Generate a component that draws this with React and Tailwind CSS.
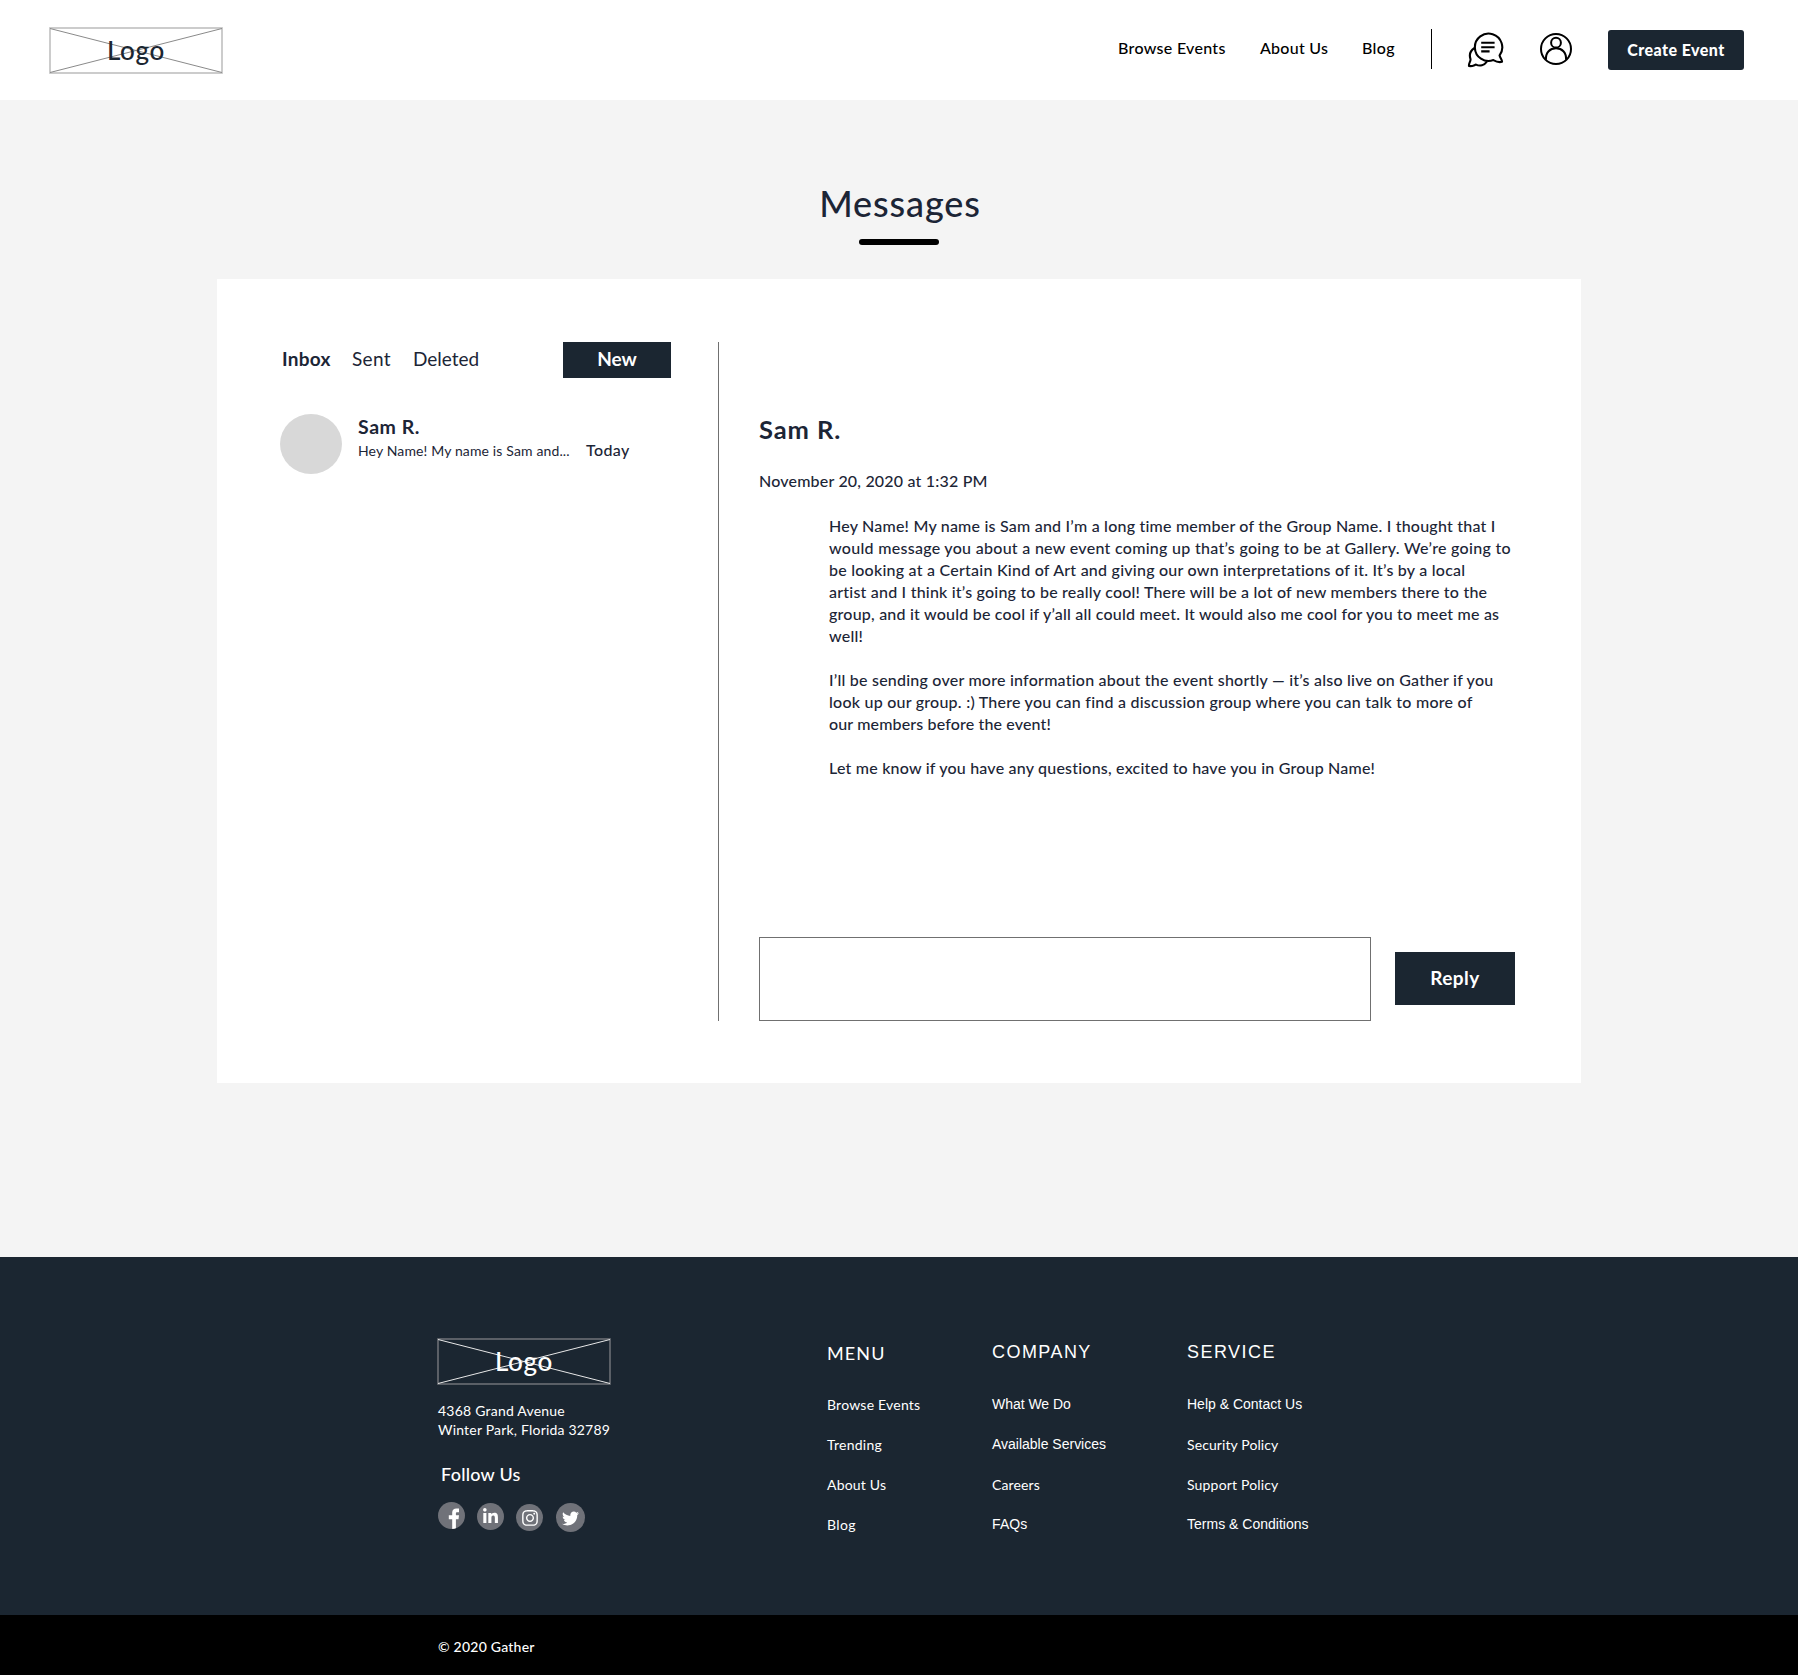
import React from "react";
import { FaLinkedinIn, FaInstagram, FaTwitter } from "react-icons/fa";

function Logo({ box, cross, text }) {
  return (
    <div className={`relative h-[47px] w-[174px] ${text}`}>
      <svg className="block" width="174" height="47" viewBox="0 0 174 47" fill="none">
        <rect x="1" y="1" width="172" height="45" stroke={box} strokeWidth="1.7" />
        <path d="M1 1.5L173 45.5M1 45.5L173 1.5" stroke={cross} strokeWidth="1" />
      </svg>
      <span className="absolute left-[58px] top-[6px] text-[26px] leading-[34px] font-medium tracking-[0.6px]">Logo</span>
    </div>
  );
}

function ChatIcon() {
  return (
    <svg width="37" height="37" viewBox="0 0 37 37" fill="none" stroke="#000" strokeWidth="2.1" strokeLinejoin="round" strokeLinecap="round">
      <path d="M32.6 23.4A13.7 13.7 0 1 0 26.4 28.1C29 29.6 32 30.6 35 29.8C35.4 28.2 33.2 25.8 32.6 23.4Z" />
      <path d="M7.6 16C3.6 18.4 2 22.6 3.5 27.2C3.8 29.3 1.6 31.4 2 34C5.2 34.6 7 33.2 9 32.6C13 34.4 17.2 33.2 19.6 29.8" />
      <path d="M14.2 10.8H27.6M14.2 15.2H27.6M14.2 19.4H22.6" strokeLinecap="butt" />
    </svg>
  );
}

function UserIcon() {
  return (
    <svg width="32" height="32" viewBox="0 0 32 32" fill="none" stroke="#000" strokeWidth="2">
      <circle cx="16" cy="16" r="15" />
      <circle cx="16" cy="9.7" r="4.9" />
      <path d="M5.9 26.8C5.6 19.2 10 15.3 16 15.3S26.4 19.2 26.1 26.8" />
    </svg>
  );
}

const paragraphs = [
  [
    ["Hey Name! My name is Sam and I’m a long time member of the Group Name. I thought that I", "tracking-[0.213px]"],
    ["would message you about a new event coming up that’s going to be at Gallery. We’re going to", "tracking-[0.288px]"],
    ["be looking at a Certain Kind of Art and giving our own interpretations of it. It’s by a local", "tracking-[0.235px]"],
    ["artist and I think it’s going to be really cool! There will be a lot of new members there to the", "tracking-[0.211px]"],
    ["group, and it would be cool if y’all all could meet. It would also me cool for you to meet me as", "tracking-[0.211px]"],
    ["well!", "tracking-[0.2px]"],
  ],
  [
    ["I’ll be sending over more information about the event shortly — it’s also live on Gather if you", "tracking-[0.222px]"],
    ["look up our group. :) There you can find a discussion group where you can talk to more of", "tracking-[0.235px]"],
    ["our members before the event!", "tracking-[0.145px]"],
  ],
  [["Let me know if you have any questions, excited to have you in Group Name!", "tracking-[0.208px]"]],
];

const lato = "font-['Lato',sans-serif]";
const sans = "relative -top-px font-['Liberation_Sans',sans-serif]";

const columns = [
  {
    title: ["MENU", "tracking-[1.1px]"],
    width: "w-[165px]",
    links: [
      ["Browse Events", `${lato} tracking-[0.22px]`],
      ["Trending", `${lato} tracking-[0.25px]`],
      ["About Us", `${lato} tracking-[0.2px]`],
      ["Blog", `${lato} tracking-[0.4px]`],
    ],
  },
  {
    title: ["COMPANY", `${sans} tracking-[1.45px]`],
    width: "w-[195px]",
    links: [
      ["What We Do", `${sans} tracking-[-0.035px]`],
      ["Available Services", `${sans} tracking-[-0.008px]`],
      ["Careers", `${lato} tracking-[0.12px]`],
      ["FAQs", `${sans} tracking-[0.1px]`],
    ],
  },
  {
    title: ["SERVICE", `${sans} tracking-[1.45px]`],
    width: "w-[180px]",
    links: [
      ["Help & Contact Us", `${sans} tracking-normal`],
      ["Security Policy", `${lato} tracking-[0.1px]`],
      ["Support Policy", `${lato} tracking-[0.17px]`],
      ["Terms & Conditions", `${sans} tracking-[0.01px]`],
    ],
  },
];

function Header() {
  return (
    <header className="flex h-[100px] items-start bg-white pl-[49px] pr-[54px] pt-[27px] text-black">
      <Logo box="#c4c4c4" cross="#8a8a8a" text="text-[#1b2631]" />
      <nav className="ml-auto mt-[10px] flex whitespace-nowrap text-base leading-[22px] font-medium">
        <a className="w-[142px] tracking-[0.3px]">Browse Events</a>
        <a className="w-[102px] tracking-[0.25px]">About Us</a>
        <a className="w-[69px] tracking-[0.35px]">Blog</a>
      </nav>
      <div className="mt-[2px] h-10 w-px shrink-0 bg-black" />
      <div className="ml-[35px] mt-[5px] w-[73px]"><ChatIcon /></div>
      <div className="mt-[6px]"><UserIcon /></div>
      <button className="ml-9 mt-[3px] h-10 w-[136px] rounded-[3px] bg-[#1b2631] text-base leading-[22px] font-black tracking-[0.45px] whitespace-nowrap text-white">
        Create Event
      </button>
    </header>
  );
}

function Inbox() {
  return (
    <section className="w-[501px] pl-[63px] pr-[47px]">
      <div className="flex h-9 text-[19px] leading-[26px]">
        <span className="w-[72px] pl-[2px] pt-1 font-bold tracking-[0.25px]">Inbox</span>
        <span className="w-[61px] pt-1 tracking-[0.35px]">Sent</span>
        <span className="pt-1">Deleted</span>
        <button className="ml-auto h-9 w-[108px] bg-[#1b2631] pb-[2px] font-bold text-white">New</button>
      </div>
      <div className="mt-9 flex">
        <div className="h-[60px] w-[62px] rounded-[50%] bg-[#d8d8d8]" />
        <div className="ml-4 whitespace-nowrap">
          <div className="text-[19.5px] leading-[26px] font-bold tracking-[0.56px]">Sam R.</div>
          <div className="-mt-px flex items-baseline text-sm leading-[22px]">
            <span className="w-[228px] tracking-[0.138px]">Hey Name! My name is Sam and...</span>
            <span className="text-base leading-[22px] font-medium tracking-[0.4px]">Today</span>
          </div>
        </div>
      </div>
    </section>
  );
}

function Conversation() {
  return (
    <section className="flex flex-1 flex-col border-l border-[#707070] pl-10">
      <h2 className="mt-[70px] text-[25.5px] leading-[34px] font-bold tracking-[0.9px]">Sam R.</h2>
      <p className="mt-6 text-base leading-[22px] font-medium tracking-[0.19px]">November 20, 2020 at 1:32 PM</p>
      <div className="mt-[23px] flex flex-col gap-[22px] pl-[70px] text-base leading-[22px] font-medium whitespace-nowrap">
        {paragraphs.map((lines, i) => (
          <p key={i}>
            {lines.map(([line, tracking]) => (
              <span key={line} className={`block ${tracking}`}>{line}</span>
            ))}
          </p>
        ))}
      </div>
      <div className="mt-auto flex items-start">
        <textarea className="block h-[84px] w-[612px] resize-none border border-[#707070] bg-white" />
        <button className="ml-6 mt-[15px] h-[53px] w-[120px] bg-[#1b2631] pb-px text-[19px] leading-[26px] font-bold tracking-[0.44px] text-white">Reply</button>
      </div>
    </section>
  );
}

function Footer() {
  const disc = "flex items-center justify-center rounded-full bg-[#707279]";
  return (
    <footer className="bg-[#1b2631] text-white">
      <div className="flex h-[358px] pl-[437px] pt-[81px]">
        <div className="w-[390px]">
          <Logo box="#666a70" cross="#e8e8e8" text="text-white" />
          <address className="ml-px mt-[16px] text-sm leading-[19px] whitespace-nowrap not-italic">
            <div className="tracking-[0.22px]">4368 Grand Avenue</div>
            <div className="tracking-[0.2px]">Winter Park, Florida 32789</div>
          </address>
          <div className="ml-1 mt-[23px] text-lg leading-[24px] font-medium tracking-[0.25px]">Follow Us</div>
          <div className="ml-px mt-4 flex items-start text-white">
            <span className="mr-3 size-[27px] overflow-hidden rounded-full bg-[#707279]">
              <svg className="block" width="27" height="27" viewBox="0 0 27 27" fill="#fff">
                <path d="M14.2 27V17.2H10.8V13.3H14.2V10.6C14.2 7.6 16 6.4 18.4 6.4H21V10.2H19.2C18.2 10.2 17.9 10.7 17.9 11.6V13.3H21L20.5 17.2H17.9V27Z" />
              </svg>
            </span>
            <span className={`mr-3 mt-px size-[27px] ${disc}`}><FaLinkedinIn className="-mt-px" size={17} /></span>
            <span className={`mr-[13px] mt-[2px] size-[27px] ${disc}`}><FaInstagram size={18} /></span>
            <span className={`mt-px size-[29px] ${disc}`}><FaTwitter className="mt-px" size={17} /></span>
          </div>
        </div>
        {columns.map(({ title, width, links }) => (
          <div key={title[0]} className={`${width} whitespace-nowrap`}>
            <h3 className={`mt-px text-lg leading-[28px] ${title[1]}`}>{title[0]}</h3>
            <ul className="mt-[28px] flex flex-col gap-5 text-sm leading-5">
              {links.map(([label, style]) => (
                <li key={label} className={style}>{label}</li>
              ))}
            </ul>
          </div>
        ))}
      </div>
      <div className="h-[60px] bg-black pl-[438px] pt-[22px] text-sm leading-5 font-medium tracking-[0.23px]">© 2020 Gather</div>
    </footer>
  );
}

export default function App() {
  return (
    <div className="w-[1798px] bg-[#f4f4f4] font-['Lato',sans-serif] text-[#1c2536]">
      <Header />
      <main className="flex h-[1157px] flex-col items-center pt-[79px]">
        <h1 className="pl-[2px] text-4xl leading-[48px] font-medium tracking-[0.87px]">Messages</h1>
        <div className="mt-3 h-[6px] w-20 rounded-full bg-black" />
        <div className="mt-[34px] flex h-[804px] w-[1364px] bg-white pt-[63px] pr-[66px] pb-[62px]">
          <Inbox />
          <Conversation />
        </div>
      </main>
      <Footer />
    </div>
  );
}
